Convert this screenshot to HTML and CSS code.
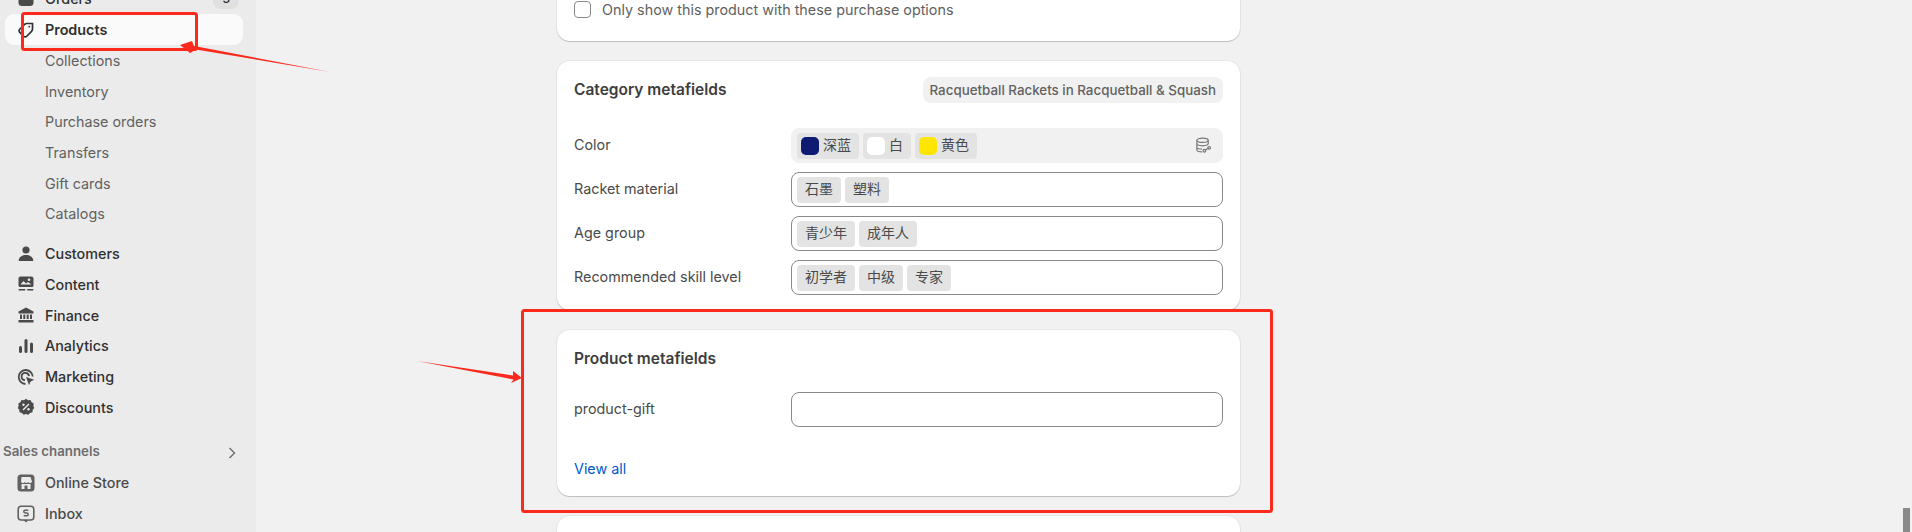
FILE: index.html
```html
<!DOCTYPE html>
<html lang="en">
<head>
  <meta charset="UTF-8" />
  <meta name="viewport" content="width=device-width, initial-scale=1.0"/>
  <title>Products - Metafields</title>
  <link rel="stylesheet" href="styles.css">
</head>
<body>
  <div class="app">
    <nav class="sidebar">
      <a class="nav-item">
        <svg class="nav-icon" viewBox="0 0 18 18"><rect x="1.500" y="2" width="15" height="14" rx="3.500" fill="#4a4a4a"/></svg>
        <span>Orders</span><span class="badge">3</span>
      </a>
      <a class="nav-item active">
        <svg class="nav-icon" viewBox="0 0 18 18" fill="none" stroke="#303030" stroke-width="1.700"><path d="M10 2.500h5.500v5.500c0 1-.5 2-1.200 2.700l-4.300 4.300c-1 1-2.600 1-3.600 0l-3.400-3.400c-1-1-1-2.600 0-3.600l4.300-4.300c.7-.7 1.700-1.200 2.700-1.200z"/><circle cx="12.300" cy="5.700" r=".9" fill="#303030" stroke="none"/></svg>
        <span>Products</span>
      </a>
      <a class="nav-sub">Collections</a>
      <a class="nav-sub">Inventory</a>
      <a class="nav-sub">Purchase orders</a>
      <a class="nav-sub">Transfers</a>
      <a class="nav-sub">Gift cards</a>
      <a class="nav-sub">Catalogs</a>

      <a class="nav-item group-start">
        <svg class="nav-icon" viewBox="0 0 18 18" fill="#4a4a4a"><circle cx="9" cy="5" r="3.600"/><path d="M2.500 16c-.6 0-.9-.4-.8-1 .5-3 3.500-5 7.300-5s6.800 2 7.300 5c.1.600-.2 1-.8 1z"/></svg>
        <span>Customers</span>
      </a>
      <a class="nav-item">
        <svg class="nav-icon" viewBox="0 0 18 18" fill="#4a4a4a"><path d="M3.500 1.500h11A2 2 0 0 1 16.500 3.500v7a1.500 1.500 0 0 1-1.500 1.500H3a1.500 1.500 0 0 1-1.500-1.500v-7a2 2 0 0 1 2-2z"/><path d="M3.500 9.500 6.500 6l2.500 2.500 2-1.500 3.500 2.500z" fill="#ebebeb"/><circle cx="12" cy="4.700" r="1.300" fill="#ebebeb"/><rect x="1.500" y="14" width="7" height="1.500" rx=".7"/><rect x="10" y="14" width="6.500" height="1.500" rx=".7"/></svg>
        <span>Content</span>
      </a>
      <a class="nav-item">
        <svg class="nav-icon" viewBox="0 0 18 18" fill="#4a4a4a"><path d="M9 1.500 16.500 5.500V7.500H1.500V5.500z"/><path d="M1.500 14h15v2.500h-15z"/><rect x="3" y="8.500" width="2" height="4.500"/><rect x="6.300" y="8.500" width="2" height="4.500"/><rect x="9.700" y="8.500" width="2" height="4.500"/><rect x="13" y="8.500" width="2" height="4.500"/></svg>
        <span>Finance</span>
      </a>
      <a class="nav-item">
        <svg class="nav-icon" viewBox="0 0 18 18" fill="#4a4a4a"><rect x="2" y="9" width="3" height="7" rx="1.500"/><rect x="7.500" y="2" width="3" height="14" rx="1.500"/><rect x="13" y="5.500" width="3" height="10.500" rx="1.500"/></svg>
        <span>Analytics</span>
      </a>
      <a class="nav-item">
        <svg class="nav-icon" viewBox="0 0 18 18" fill="none" stroke="#4a4a4a" stroke-width="1.800"><path d="M8.500 16A7 7 0 1 1 15.700 8.500"/><path d="M8 12.200A3.700 3.700 0 1 1 12 8.200"/><path d="M9 9 17.200 11.800 13.700 13.400 12 17z" fill="#4a4a4a" stroke="none"/></svg>
        <span>Marketing</span>
      </a>
      <a class="nav-item">
        <svg class="nav-icon" viewBox="0 0 18 18"><path d="M9 .8 11 2.300 13.500 2 14.600 4.200 16.700 5.400 16.300 7.900 17.300 9.900 15.700 11.700 15.500 14.200 13 14.900 11.400 16.800 9 16 6.600 16.800 5 14.900 2.500 14.200 2.300 11.700.7 9.900 1.700 7.900 1.300 5.400 3.400 4.200 4.500 2 7 2.300z" fill="#4a4a4a"/><path d="M6 12 12 6" stroke="#ebebeb" stroke-width="1.500"/><circle cx="6.500" cy="6.800" r="1.200" fill="#ebebeb"/><circle cx="11.500" cy="11.200" r="1.200" fill="#ebebeb"/></svg>
        <span>Discounts</span>
      </a>

      <div class="nav-section">
        <span>Sales channels</span>
        <svg class="chevron" viewBox="0 0 10 14" fill="none" stroke="#6d6d6d" stroke-width="1.400"><path d="M2.500 2 7.500 7 2.500 12"/></svg>
      </div>
      <a class="nav-item channel">
        <svg class="nav-icon" viewBox="0 0 18 18"><rect x=".5" y=".5" width="17" height="17" rx="3.500" fill="#616161"/><path d="M4.500 3h9l1.500 4.500c-.4 1-1.200 1.500-2 1.500-.7 0-1.400-.4-1.700-1-.4.600-1 1-1.800 1s-1.400-.4-1.800-1c-.3.600-1 1-1.700 1-.8 0-1.600-.5-2-1.500z" fill="#ebebeb"/><path d="M4.500 10v5h3v-3.500h3V15h3v-5z" fill="#ebebeb"/></svg>
        <span>Online Store</span>
      </a>
      <a class="nav-item channel">
        <svg class="nav-icon" viewBox="0 0 18 18"><rect x="1.200" y="1.200" width="15.600" height="13.800" rx="3" fill="#ebebeb" stroke="#616161" stroke-width="1.600"/><path d="M6.500 15h5L9 17.500z" fill="#616161"/><path d="M11.300 5.200H8.200a1.300 1.300 0 0 0 0 2.800h1.600a1.300 1.300 0 0 1 0 2.800H6.700" fill="none" stroke="#616161" stroke-width="1.500"/></svg>
        <span>Inbox</span>
      </a>
    </nav>

    <main class="main">
      <div class="column">
        <section class="card card-options">
          <label class="check-row"><span class="checkbox"></span>Only show this product with these purchase options</label>
        </section>

        <section class="card card-category">
          <div class="card-head">
            <h2>Category metafields</h2>
            <span class="category-pill">Racquetball Rackets in Racquetball &amp; Squash</span>
          </div>
          <div class="field-list">
            <div class="field-row">
              <span class="field-label">Color</span>
              <div class="field field-locked">
                <span class="tag"><i class="swatch swatch-navy"></i>深蓝</span>
                <span class="tag"><i class="swatch swatch-white"></i>白</span>
                <span class="tag"><i class="swatch swatch-yellow"></i>黄色</span>
                <svg class="db-icon" viewBox="0 0 18 18" fill="none" stroke="#7a7a7a" stroke-width="1.300"><ellipse cx="8" cy="3.500" rx="6" ry="2.300"/><path d="M2 3.500v10c0 1.300 2.500 2.300 5.500 2.300M2 7c0 1.300 2.700 2.300 6 2.300s6-1 6-2.300V3.500M2 10.500c0 1.300 2.500 2.300 5.500 2.300"/><circle cx="10" cy="14.500" r="1.400"/><circle cx="15" cy="11.500" r="1.400"/><path d="M11 13.800 14 12"/></svg>
              </div>
            </div>
            <div class="field-row">
              <span class="field-label">Racket material</span>
              <div class="field">
                <span class="tag">石墨</span>
                <span class="tag">塑料</span>
              </div>
            </div>
            <div class="field-row">
              <span class="field-label">Age group</span>
              <div class="field">
                <span class="tag">青少年</span>
                <span class="tag">成年人</span>
              </div>
            </div>
            <div class="field-row">
              <span class="field-label">Recommended skill level</span>
              <div class="field">
                <span class="tag">初学者</span>
                <span class="tag">中级</span>
                <span class="tag">专家</span>
              </div>
            </div>
          </div>
        </section>

        <section class="card">
          <div class="card-head card-head-plain">
            <h2>Product metafields</h2>
          </div>
          <div class="field-list">
            <div class="field-row">
              <span class="field-label">product-gift</span>
              <div class="field"></div>
            </div>
          </div>
          <a class="view-all">View all</a>
        </section>

        <section class="card card-next"></section>
      </div>
    </main>
  </div>

  <!-- red markup drawn on top of the screenshot -->
  <svg class="markup" viewBox="0 0 1912 532" fill="none">
    <rect x="22.500" y="13.500" width="174" height="36" rx="2" stroke="#fb2a1c" stroke-width="3"/>
    <path d="M330 72 196 49.500 190 53 180 45 192 41 194 46z" fill="#fb2a1c"/>
    <rect x="522.500" y="310.500" width="749" height="201" rx="2" stroke="#fb2a1c" stroke-width="3"/>
    <path d="M417 361 513 375.500 513 371 522 378 511 383 513.500 379.500z" fill="#fb2a1c"/>
  </svg>
  <div class="scroll-thumb"></div>
</body>
</html>
```

FILE: styles.css
```css
* {
  box-sizing: border-box;
}
html, body {
  height: 100%;
}
body {
  margin: 0;
  font-family: Inter, "Noto Sans CJK SC", sans-serif;
  font-size: 14.35px;
  color: #303030;
  background-color: #f1f1f1;
  overflow: hidden;
}
.app {
  display: flex;
  height: 532px;
  overflow: hidden;
}

/* sidebar */
.sidebar {
  width: 256px;
  flex-shrink: 0;
  padding: 0 13px 0 5px;
  background-color: #ebebeb;
}
.nav-item, .nav-sub {
  display: flex;
  align-items: center;
  height: 30.7px;
  border-radius: 9px;
  white-space: nowrap;
}
.nav-item {
  gap: 10px;
  padding-left: 12px;
  font-weight: 500;
  color: #303030;
}
.nav-item:first-child {
  margin-top: -16.4px;
}
.nav-item.active {
  background-color: #fafafa;
  font-weight: 600;
}
.nav-item.group-start {
  margin-top: 9.300px;
}
.nav-item.channel {
  color: #4a4a4a;
}
.nav-icon {
  width: 18px;
  height: 18px;
  flex-shrink: 0;
}
.nav-sub {
  padding-left: 40px;
  color: #616161;
}
.badge {
  margin-left: auto;
  margin-right: 4px;
  padding: 0 9px;
  border-radius: 8px;
  background-color: #e0e0e0;
  font-size: 12px;
  line-height: 20px;
}
.nav-section {
  display: flex;
  align-items: center;
  justify-content: space-between;
  height: 30px;
  margin: 13px 0 2px -2px;
  font-size: 13.3px;
  font-weight: 600;
  color: #6d6d6d;
}
.chevron {
  width: 10px;
  height: 14px;
  margin: 4px 6px 0 0;
}

/* main column */
.main {
  flex: 1;
  padding-left: 301px;
}
.column {
  display: flex;
  flex-direction: column;
  gap: 20px;
  width: 683px;
  margin-top: -20px;
}
.card {
  padding: 17px;
  background-color: #fff;
  border-radius: 13px;
  box-shadow: 0 1px 1px rgba(0, 0, 0, 0.18), 0 0 0 1px rgba(0, 0, 0, 0.04);
}
.card-options {
  padding: 19px 17px 22px;
}
.card-category {
  padding-top: 16px;
  padding-bottom: 15px;
}
.card-next {
  height: 60px;
}
.check-row {
  display: flex;
  align-items: center;
  gap: 11px;
  height: 20px;
  color: #616161;
}
.checkbox {
  width: 17px;
  height: 17px;
  border: 1px solid #8a8a8a;
  border-radius: 4px;
  background-color: #fff;
}
.card-head {
  display: flex;
  align-items: center;
  justify-content: space-between;
  height: 26px;
  margin-bottom: 25px;
}
.card-head-plain {
  height: 22px;
  margin-bottom: 23px;
}
.card-head h2 {
  margin: 0 0 2px;
  font-size: 15.5px;
  font-weight: 600;
  color: #3d3d3d;
}
.card-head-plain h2 {
  margin: 0;
}
.category-pill {
  padding: 0 7px;
  border-radius: 8px;
  background-color: #f1f1f1;
  font-size: 13.35px;
  font-weight: 500;
  line-height: 26px;
  color: #616161;
  white-space: nowrap;
}
.field-list {
  display: flex;
  flex-direction: column;
  gap: 9px;
}
.field-row {
  display: grid;
  grid-template-columns: 217px 1fr;
  align-items: center;
}
.field-label {
  padding-bottom: 2px;
  color: #4a4a4a;
}
.field {
  display: flex;
  align-items: center;
  gap: 4px;
  height: 35px;
  padding: 0 5px;
  border: 1px solid #8a8a8a;
  border-radius: 8px;
  background-color: #fff;
}
.field-locked {
  border-color: #f1f1f1;
  background-color: #f1f1f1;
}
.tag {
  display: flex;
  align-items: center;
  gap: 4px;
  height: 26px;
  padding: 0 8px 3px;
  border-radius: 4px;
  background-color: #e3e3e3;
  font-size: 14px;
  color: #4a4a4a;
}
.field-locked .tag {
  padding: 0 8px 3px 4px;
}
.swatch {
  width: 18px;
  height: 18px;
  margin-top: 3px;
  border-radius: 5px;
}
.swatch-navy {
  background-color: #0f1a73;
}
.swatch-white {
  background-color: #fff;
}
.swatch-yellow {
  background-color: #ffe600;
}
.db-icon {
  width: 17px;
  height: 17px;
  margin-left: auto;
  margin-right: 5px;
}
.view-all {
  display: block;
  margin-top: 32px;
  line-height: 20px;
  color: #005bd3;
}

/* overlays */
.markup {
  position: absolute;
  top: 0;
  left: 0;
  width: 1912px;
  height: 532px;
}
.scroll-thumb {
  position: absolute;
  top: 508px;
  left: 1903px;
  width: 7px;
  height: 24px;
  background-color: #8a8a8a;
}
```
